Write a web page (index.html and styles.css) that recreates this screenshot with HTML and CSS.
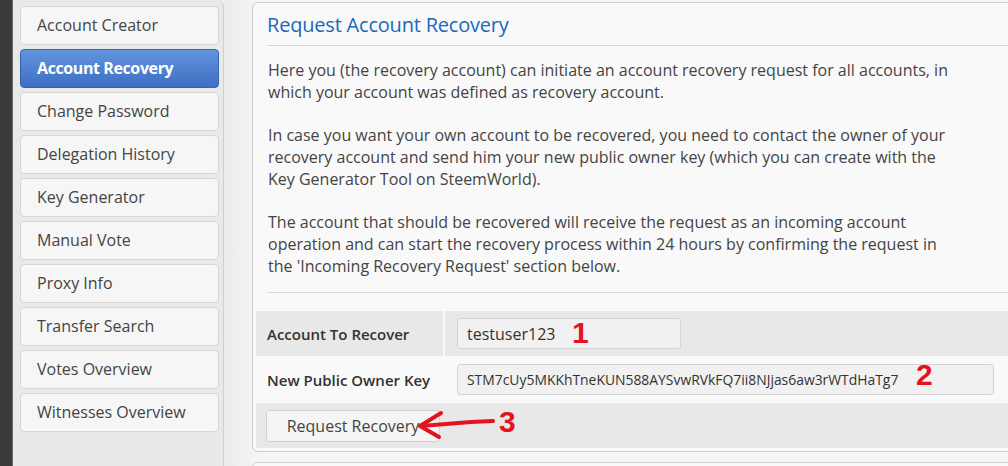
FILE: index.html
```html
<!DOCTYPE html>
<html lang="en">
<head>
    <meta charset="UTF-8">
    <meta name="viewport" content="width=device-width, initial-scale=1.0">
    <title>Account Recovery</title>
    <link rel="stylesheet" href="styles.css">
</head>
<body>
    <div class="edge"></div>
    <div class="sidebar">
        <a class="nav-item">Account Creator</a>
        <a class="nav-item active">Account Recovery</a>
        <a class="nav-item">Change Password</a>
        <a class="nav-item">Delegation History</a>
        <a class="nav-item">Key Generator</a>
        <a class="nav-item">Manual Vote</a>
        <a class="nav-item">Proxy Info</a>
        <a class="nav-item">Transfer Search</a>
        <a class="nav-item">Votes Overview</a>
        <a class="nav-item">Witnesses Overview</a>
    </div>

    <div class="content">
        <div class="panel">
            <h2>Request Account Recovery</h2>
            <hr>
            <p>Here you (the recovery account) can initiate an account recovery request for all accounts, in which your account was defined as recovery account.</p>
            <p>In case you want your own account to be recovered, you need to contact the owner of your recovery account and send him your new public owner key (which you can create with the Key Generator Tool on SteemWorld).</p>
            <p>The account that should be recovered will receive the request as an incoming account operation and can start the recovery process within 24 hours by confirming the request in the 'Incoming Recovery Request' section below.</p>
            <hr class="bottom-rule">

            <div class="form-table">
                <div class="row shaded">
                    <div class="label">Account To Recover</div>
                    <div class="value"><input type="text" class="short" value="testuser123"></div>
                </div>
                <div class="row">
                    <div class="label">New Public Owner Key</div>
                    <div class="value"><input type="text" class="long" value="STM7cUy5MKKhTneKUN588AYSvwRVkFQ7ii8NJjas6aw3rWTdHaTg7"></div>
                </div>
                <div class="row shaded">
                    <div class="action"><button>Request Recovery</button></div>
                </div>
            </div>

            <!-- red screenshot annotations -->
            <span class="mark mark1">1</span>
            <span class="mark mark2">2</span>
            <span class="mark mark3">3</span>
            <svg class="arrow" width="90" height="32" viewBox="0 0 90 32">
                <path d="M78 13 L56 14 L6 18" stroke="#e3141d" stroke-width="4" fill="none" stroke-linecap="round"/>
                <path d="M26 5 L5 18 L24 29" stroke="#e3141d" stroke-width="4" fill="none" stroke-linecap="round" stroke-linejoin="round"/>
            </svg>
        </div>
        <div class="panel next"></div>
    </div>
</body>
</html>
```

FILE: styles.css
```css
body {
    font-family: 'Open Sans', 'Noto Sans', sans-serif;
    margin: 0;
    padding: 0;
    display: flex;
    height: 466px;
    overflow: hidden;
    background: #f4f4f4;
    color: #444;
}

.edge {
    width: 12px;
    flex-shrink: 0;
    background: #3a3a3a;
    border-right: 1px solid #6a6a6a;
}

.sidebar {
    width: 199px;
    flex-shrink: 0;
    background: #e9e9e9;
    border-right: 1px solid #cfcfcf;
    border-radius: 0 6px 0 0;
    padding: 6px 4px 0 7px;
    display: flex;
    flex-direction: column;
    gap: 4px;
}

.nav-item {
    display: block;
    height: 37px;
    line-height: 37px;
    padding-left: 16px;
    background: #f6f6f6;
    border: 1px solid #d6d6d6;
    border-radius: 4px;
    font-size: 16px;
    color: #444;
}

.nav-item.active {
    background: linear-gradient(#6294dc, #3d6fc4);
    border-color: #3563b4;
    color: #fff;
    font-weight: 700;
    letter-spacing: -0.4px;
}

.content {
    flex: 1;
    padding-left: 28px;
    background: linear-gradient(90deg, #ebebeb, #f6f6f6 40px);
}

.panel {
    position: relative;
    width: 820px;
    margin-top: 2px;
    background: #f9f9f9;
    border: 1px solid #cdcdcd;
    border-radius: 6px;
    padding: 0 0 3px 3px;
}

.panel h2 {
    margin: 0;
    padding: 8px 0 0 11px;
    height: 34px;
    font-size: 20px;
    font-weight: 500;
    color: #1a67c0;
    letter-spacing: -0.2px;
}

.panel hr {
    margin: 0 0 0 11px;
    border: none;
    border-top: 1px solid #d8d8d8;
}

.panel p {
    margin: 13px 0 0 12px;
    width: 695px;
    font-size: 16px;
    line-height: 22px;
    color: #444;
}

.panel p + p {
    margin-top: 21px;
}

.panel .bottom-rule {
    margin-top: 15px;
}

.form-table {
    margin-top: 18px;
    display: flex;
    flex-direction: column;
    gap: 1px;
}

.row {
    display: flex;
    height: 45px;
    align-items: stretch;
}

.row.shaded {
    background: #e8e8e8;
}

.label {
    width: 176px;
    padding-left: 11px;
    display: flex;
    align-items: center;
    font-size: 15px;
    font-weight: 600;
    color: #333;
    border-right: 2px solid #f9f9f9;
}

.value {
    display: flex;
    align-items: center;
    padding-left: 12px;
}

input {
    height: 31px;
    box-sizing: border-box;
    background: #f1f1f1;
    border: 1px solid #d4d4d4;
    border-radius: 3px;
    padding: 0 9px;
    font-family: 'Open Sans', sans-serif;
    color: #333;
}

input.short {
    width: 224px;
    font-size: 16px;
}

input.long {
    width: 537px;
    font-size: 13.9px;
}

.action {
    display: flex;
    align-items: center;
    padding-left: 10px;
}

button {
    width: 174px;
    height: 32px;
    background: #f5f5f5;
    border: 1px solid #d2d2d2;
    border-radius: 3px;
    font-family: 'Open Sans', sans-serif;
    font-size: 16px;
    color: #444;
}

.mark {
    position: absolute;
    font-family: 'Liberation Sans', Arial, sans-serif;
    font-weight: 700;
    font-size: 30px;
    color: #e3141d;
}

.mark1 { left: 319px; top: 313px; }
.mark2 { left: 663px; top: 355px; }
.mark3 { left: 246px; top: 402px; }

.arrow {
    position: absolute;
    left: 162px;
    top: 405px;
}

.panel.next {
    margin-top: 10px;
    height: 40px;
}
```
